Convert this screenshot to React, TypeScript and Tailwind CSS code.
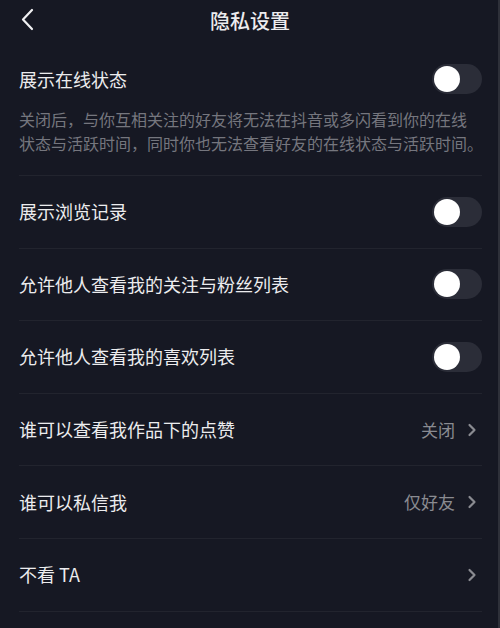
import React from "react";

const Toggle = () => (
  <div className="relative w-[50px] h-[30px] rounded-full bg-[#2b2d38] shrink-0">
    <div className="absolute left-[2px] top-[2px] w-[26px] h-[26px] rounded-full bg-white" />
  </div>
);

const Chevron = () => (
  <svg width="10" height="14" viewBox="0 0 10 14" className="shrink-0">
    <polyline points="2.5,2 7.5,7 2.5,12" fill="none" stroke="#8a8b91" strokeWidth="2.2" strokeLinecap="round" strokeLinejoin="round" />
  </svg>
);

const Row = ({ title, right }: { title: string; right: React.ReactNode }) => (
  <div className="h-[71.6px] flex items-center justify-between border-b border-[#22242e] box-content">
    <span className="text-[18px] text-[#ececee]">{title}</span>
    {right}
  </div>
);

const LinkRight = ({ label }: { label?: string }) => (
  <div className="flex items-center gap-[12px] pr-[5px]">
    {label && <span className="text-[17px] text-[#8a8b91]">{label}</span>}
    <Chevron />
  </div>
);

export default function App() {
  return (
    <div
      className="relative w-[500px] h-[628px] overflow-hidden bg-[#161823]"
      style={{ fontFamily: '"Noto Sans CJK SC", "Noto Sans", sans-serif' }}
    >
      <div className="h-[42px] relative flex items-center justify-center">
        <svg width="16" height="24" viewBox="0 0 16 24" className="absolute left-[20px] top-[8px]">
          <polyline points="12,2 3,11.5 12,21" fill="none" stroke="#f0f0f2" strokeWidth="2.2" strokeLinecap="round" strokeLinejoin="round" />
        </svg>
        <span className="text-[20px] text-[#ececee] font-medium">隐私设置</span>
      </div>
      <div className="pl-[19px] pr-[18px]">
        <div className="pt-[22px] pb-[20px] border-b border-[#22242e]">
          <div className="h-[30px] flex items-center justify-between">
            <span className="text-[18px] text-[#ececee]">展示在线状态</span>
            <Toggle />
          </div>
          <p className="mt-[13px] text-[16px] leading-[24px] text-[#75767e] whitespace-nowrap">
            关闭后，与你互相关注的好友将无法在抖音或多闪看到你的在线
            <br />
            状态与活跃时间，同时你也无法查看好友的在线状态与活跃时间。
          </p>
        </div>
        <Row title="展示浏览记录" right={<Toggle />} />
        <Row title="允许他人查看我的关注与粉丝列表" right={<Toggle />} />
        <Row title="允许他人查看我的喜欢列表" right={<Toggle />} />
        <Row title="谁可以查看我作品下的点赞" right={<LinkRight label="关闭" />} />
        <Row title="谁可以私信我" right={<LinkRight label="仅好友" />} />
        <Row title="不看 TA" right={<LinkRight />} />
      </div>
      <div className="absolute right-0 top-0 w-[2px] h-full bg-[#2e3039]" />
    </div>
  );
}
